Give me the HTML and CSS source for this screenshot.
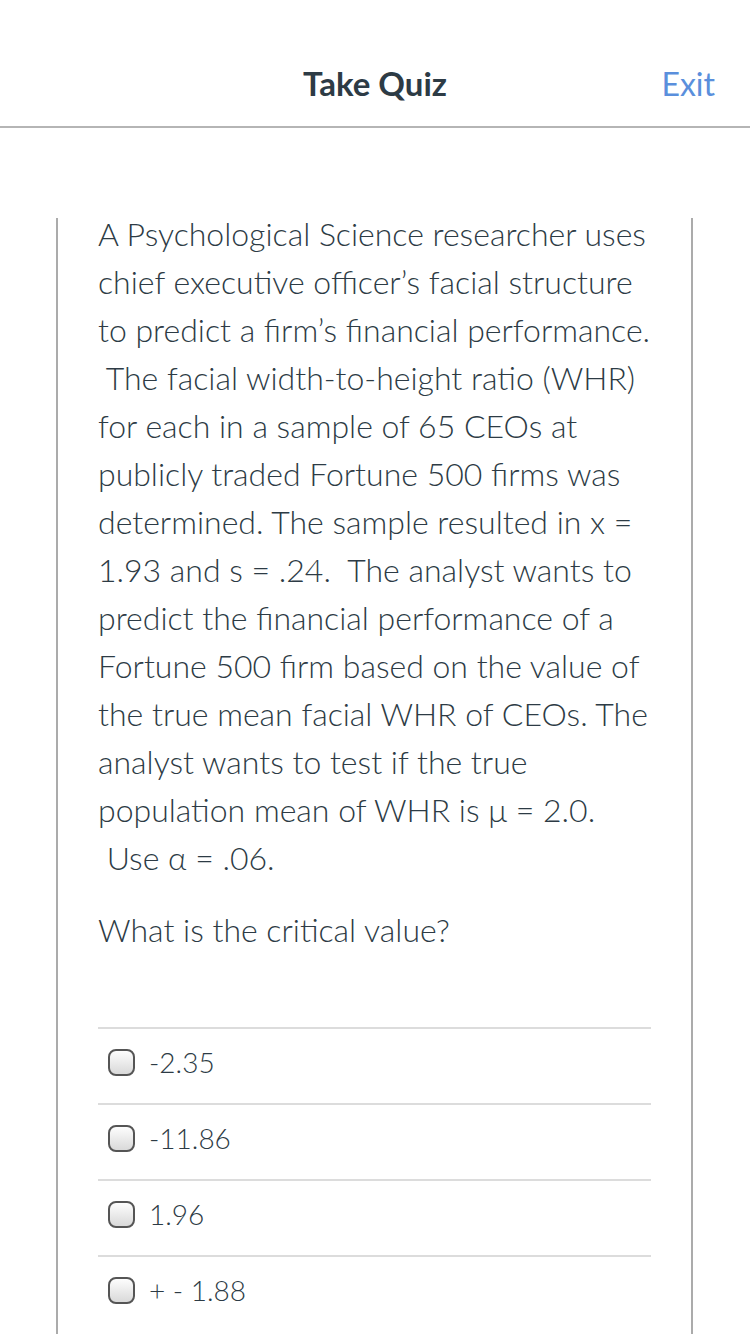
FILE: index.html
```html
<!DOCTYPE html>
<html lang="en">
<head>
<meta charset="utf-8">
<title>Take Quiz</title>
<link rel="stylesheet" href="styles.css">
</head>
<body>
<header class="topbar">
  <h1 class="title">Take Quiz</h1>
  <a class="exit" href="#">Exit</a>
</header>
<main class="quiz">
  <section class="card">
    <p class="question">A Psychological Science researcher uses<br>chief executive officer’s facial structure<br>to predict a firm’s financial performance.<br>&nbsp;The facial width-to-height ratio (WHR)<br>for each in a sample of 65 CEOs at<br>publicly traded Fortune 500 firms was<br>determined. The sample resulted in x =<br>1.93 and s = .24. &nbsp;The analyst wants to<br>predict the financial performance of a<br>Fortune 500 firm based on the value of<br>the true mean facial WHR of CEOs. The<br>analyst wants to test if the true<br>population mean of WHR is μ = 2.0.<br>&nbsp;Use α = .06.</p>
    <p class="prompt">What is the critical value?</p>
    <ul class="answers">
      <li class="answer"><span class="radio"></span><span class="label">-2.35</span></li>
      <li class="answer"><span class="radio"></span><span class="label">-11.86</span></li>
      <li class="answer"><span class="radio"></span><span class="label">1.96</span></li>
      <li class="answer"><span class="radio"></span><span class="label">+ - 1.88</span></li>
    </ul>
  </section>
</main>
</body>
</html>
```

FILE: styles.css
```css
html, body {
  margin: 0;
  padding: 0;
  background: #fff;
}
body {
  font-family: Lato, "Open Sans", sans-serif;
  color: #2d3b45;
  height: 1334px;
  overflow: hidden;
}
.topbar {
  height: 126px;
  border-bottom: 2px solid #b5b5b5;
  display: flex;
  align-items: center;
  justify-content: center;
  position: relative;
}
.title {
  margin: 0;
  font-size: 33px;
  font-weight: 700;
  color: #2d3b45;
  padding-top: 40px;
  line-height: 40px;
}
.exit {
  position: absolute;
  right: 35px;
  top: 64px;
  font-size: 32px;
  line-height: 40px;
  color: #5a8fdc;
  text-decoration: none;
}
.quiz {
  padding-top: 90px;
  padding-left: 56px;
}
.card {
  display: flow-root;
  width: 553px;
  height: 1116px;
  border-left: 2px solid #ababab;
  border-right: 2px solid #ababab;
  padding: 0 40px;
  font-weight: 300;
}
.question {
  margin: -8px 0 0 0;
  font-size: 32px;
  line-height: 48px;
  white-space: nowrap;
}
.prompt {
  margin: 24px 0 0 0;
  font-size: 32px;
  line-height: 48px;
}
.answers {
  list-style: none;
  margin: 73px 0 0 0;
  padding: 0;
}
.answer {
  border-top: 2px solid #dcdcdc;
  display: flex;
  align-items: center;
  gap: 14px;
  padding-left: 10px;
  padding-bottom: 8px;
  box-sizing: border-box;
  height: 76px;
}
.radio {
  width: 23px;
  height: 23px;
  border: 2px solid #555;
  border-radius: 8px;
  background: linear-gradient(#fdfdfd, #d9d9d9);
  flex: none;
}
.label {
  font-size: 28px;
  line-height: 40px;
}
```
